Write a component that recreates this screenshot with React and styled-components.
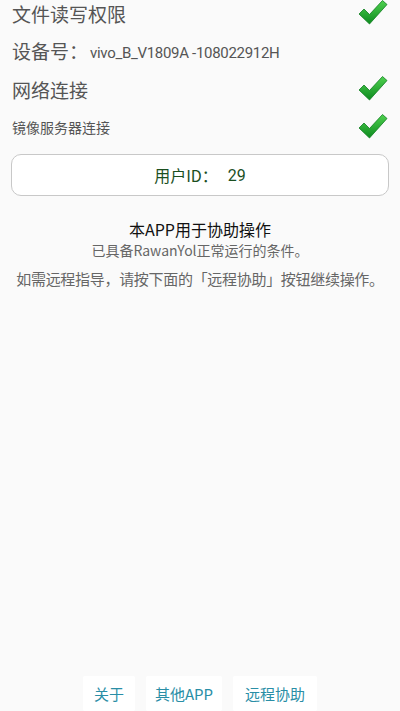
import React from "react";
import styled, { createGlobalStyle } from "styled-components";

const Global = createGlobalStyle`
  html, body { margin: 0; padding: 0; background: #fafafa; }
  body { font-family: Roboto, "Noto Sans CJK SC", sans-serif; }
  #root { height: 711px; overflow: hidden; }
`;

const Page = styled.div`
  height: 711px;
  display: flex;
  flex-direction: column;
  background: #fafafa;
`;

const List = styled.div`
  margin-top: -6px;
  display: flex;
  flex-direction: column;
`;

const Row = styled.div`
  height: 38px;
  display: flex;
  align-items: center;
  justify-content: space-between;
  padding: 0 12px 0 12px;
`;

const Label = styled.span`
  font-family: "Noto Sans CJK SC", sans-serif;
  font-size: ${(p) => (p.$small ? "14px" : "19px")};
  color: #555;
  line-height: 1;
`;

const Device = styled.span`
  font-family: Roboto, "Noto Sans CJK SC", sans-serif;
  font-size: 15px;
  color: #555;
  margin-left: 2px;
  letter-spacing: -0.3px;
  vertical-align: 1px;
`;

const IdBox = styled.div`
  margin: 8px 11px 0;
  height: 40px;
  border: 1px solid #c8c8c8;
  border-radius: 10px;
  background: #fff;
  display: flex;
  align-items: center;
  justify-content: center;
  font-family: "Noto Sans CJK SC", sans-serif;
  font-size: 16px;
  color: #1b4f1f;
`;

const IdNum = styled.span`
  font-family: Roboto, sans-serif;
  margin-left: 10px;
`;

const Info = styled.div`
  margin-top: 22px;
  display: flex;
  flex-direction: column;
  align-items: center;
  font-family: "Noto Sans CJK SC", sans-serif;
`;

const Title = styled.div`
  font-size: 16px;
  line-height: 22px;
  color: #111;
`;

const Line = styled.div`
  font-size: ${(p) => p.$fs || "14px"};
  letter-spacing: ${(p) => p.$ls || "0"};
  line-height: 20px;
  color: #666;
  margin-top: ${(p) => p.$mt || "0"};
`;

const Footer = styled.div`
  margin-top: auto;
  display: flex;
  justify-content: center;
  gap: 11px;
`;

const FootBtn = styled.div`
  height: 35px;
  padding: 0 ${(p) => p.$pad || "11px"};
  background: #fff;
  display: flex;
  align-items: center;
  justify-content: center;
  font-family: "Noto Sans CJK SC", sans-serif;
  font-size: 15px;
  color: #2a8ea6;
  border-radius: 2px;
`;

const Check = () => (
  <svg width="30" height="28" viewBox="0 0 30 28">
    <defs>
      <linearGradient id="cg" x1="0" y1="0" x2="0" y2="1">
        <stop offset="0" stopColor="#4fd14f" />
        <stop offset="1" stopColor="#0d8a1f" />
      </linearGradient>
    </defs>
    <path
      d="M1 15 L6 10 L11.5 15.5 L24.5 1.5 L29 5.5 L11.5 25 Z"
      fill="url(#cg)"
      stroke="#0f7d1f"
      strokeWidth="0.8"
      strokeLinejoin="round"
    />
  </svg>
);

export default function App() {
  return (
    <>
      <Global />
      <Page>
        <List>
          <Row>
            <Label>文件读写权限</Label>
            <Check />
          </Row>
          <Row>
            <Label>
              设备号：<Device>vivo_B_V1809A -108022912H</Device>
            </Label>
          </Row>
          <Row>
            <Label>网络连接</Label>
            <Check />
          </Row>
          <Row>
            <Label $small>镜像服务器连接</Label>
            <Check />
          </Row>
        </List>
        <IdBox>
          用户ID：<IdNum>29</IdNum>
        </IdBox>
        <Info>
          <Title>本APP用于协助操作</Title>
          <Line>已具备RawanYol正常运行的条件。</Line>
          <Line $mt="9px" $fs="15px" $ls="-0.3px">
            如需远程指导，请按下面的「远程协助」按钮继续操作。
          </Line>
        </Info>
        <Footer>
          <FootBtn $pad="11px">关于</FootBtn>
          <FootBtn $pad="9px">其他APP</FootBtn>
          <FootBtn $pad="12px">远程协助</FootBtn>
        </Footer>
      </Page>
    </>
  );
}
